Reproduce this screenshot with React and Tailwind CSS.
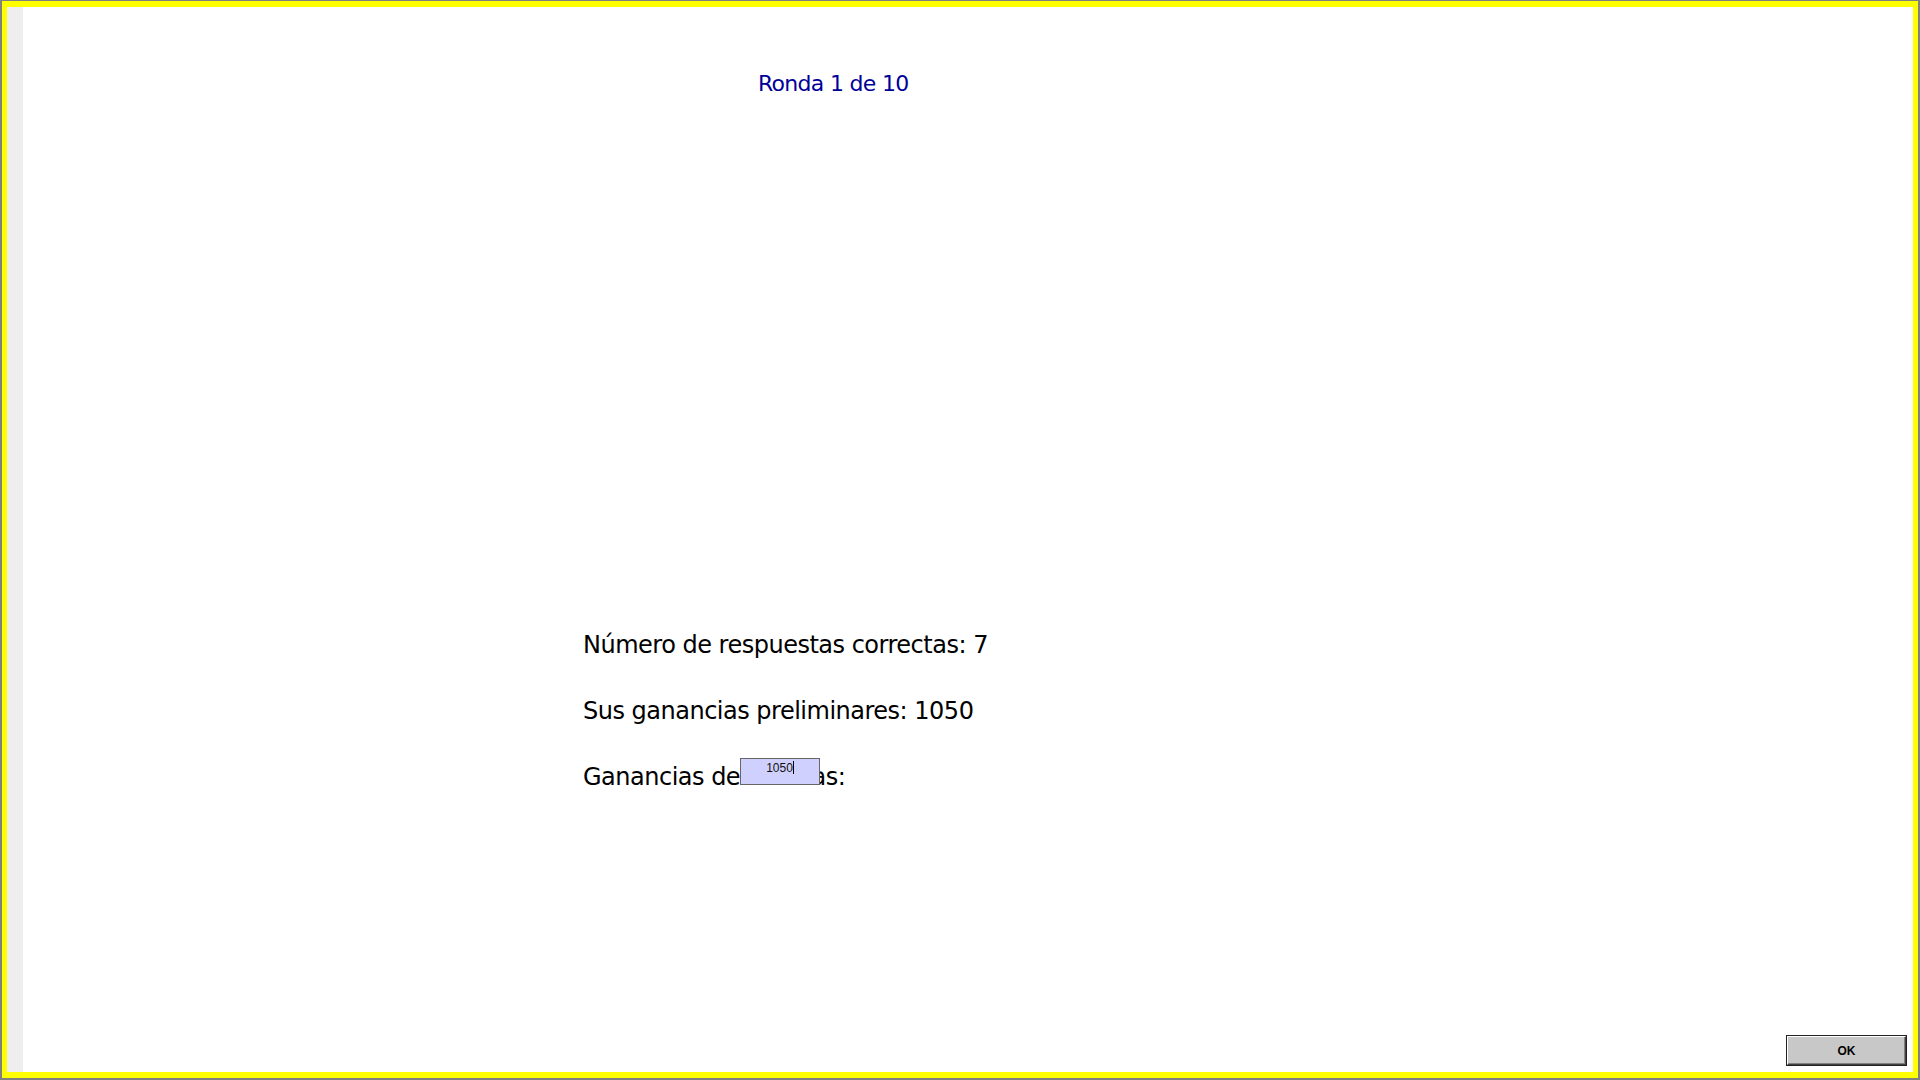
import React from 'react'

export default function App() {
    return (
        <div className="w-[1920px] h-[1080px] bg-[#808080] pt-px pl-[2px] pr-[2px] pb-[2px] overflow-hidden">
            <div className="w-full h-full bg-[#ffff00] pt-[6px] pl-[5px] pr-[5px] pb-[6px]">
                <div className="w-full h-full flex bg-white">
                    <div className="w-[16px] h-full bg-[#eeeeee]" />
                    <div className="flex-1 flex flex-col relative" style={{ fontFamily: '"DejaVu Sans", sans-serif' }}>
                        <div className="pt-[64px] pl-[735px] text-[22px] leading-[26px] text-[#000099] tracking-[-0.7px]">
                            Ronda 1 de 10
                        </div>
                        <div className="pt-[533px] pl-[560px] text-[24px] text-black tracking-[-0.5px]">
                            <div className="h-[66px] leading-[30px]">Número de respuestas correctas: 7</div>
                            <div className="h-[66px] leading-[30px]">Sus ganancias preliminares: 1050</div>
                            <div className="h-[66px] leading-[30px] relative">
                                Ganancias declaradas:
                                <div className="absolute left-[157px] top-[-4px] w-[80px] h-[27px] bg-[#d0d0ff] border border-[#666666] flex justify-center">
                                    <span className="text-[12px] leading-[14px] tracking-normal text-[#111] mt-[2px]" style={{ fontFamily: '"Liberation Sans", sans-serif' }}>
                                        1050<span className="inline-block w-px h-[13px] bg-black align-[-2px]" />
                                    </span>
                                </div>
                            </div>
                        </div>
                        <div className="flex-1" />
                        <div className="flex justify-end pr-[7px] pb-[7px]">
                            <button className="w-[119px] h-[29px] bg-[#c8c8c8] border border-t-[#ffffff] border-l-[#ffffff] border-r-[#404040] border-b-[#404040] outline outline-1 outline-[#222] text-[12px] font-bold text-black" style={{ fontFamily: '"Liberation Sans", sans-serif', boxShadow: 'inset -1px -1px 0 #808080' }}>
                                OK
                            </button>
                        </div>
                    </div>
                </div>
            </div>
        </div>
    )
}
